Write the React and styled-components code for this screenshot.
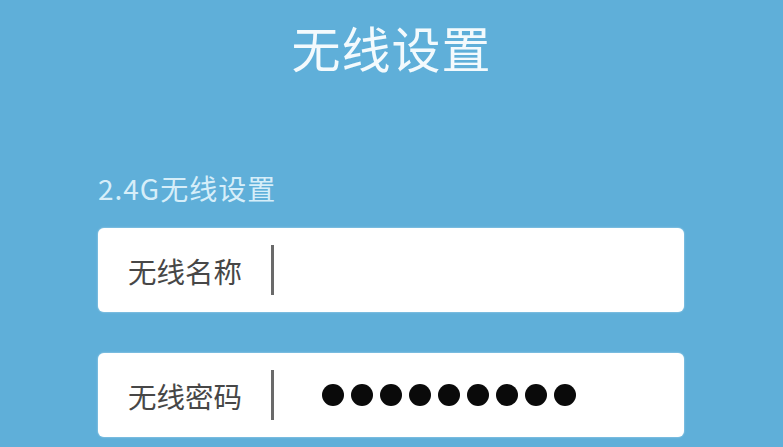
import styled, { createGlobalStyle } from "styled-components";

const GlobalStyle = createGlobalStyle`
  html, body {
    margin: 0;
    padding: 0;
    background: #5fafd9;
  }
  body {
    font-family: "Noto Sans CJK SC", "Noto Sans", sans-serif;
  }
`;

const Page = styled.div`
  width: 783px;
  height: 447px;
  overflow: hidden;
  background: #5fafd9;
  display: flex;
  flex-direction: column;
`;

const Title = styled.h1`
  margin: 0;
  padding-top: 21px;
  height: 52px;
  line-height: 52px;
  text-align: center;
  font-size: 49px;
  font-weight: 400;
  color: #f3fafd;
  letter-spacing: 1px;
`;

const Content = styled.div`
  display: flex;
  flex-direction: column;
  padding: 97px 99px 0 98px;
`;

const SectionLabel = styled.div`
  height: 36px;
  line-height: 36px;
  font-size: 28px;
  letter-spacing: 1px;
  color: #d6eef9;
  margin-bottom: 22px;
`;

const Fields = styled.div`
  display: flex;
  flex-direction: column;
  gap: 41px;
`;

const Field = styled.div`
  height: 84px;
  background: #ffffff;
  border-radius: 6px;
  display: flex;
  align-items: center;
  padding-left: 30px;
  box-shadow: 0 0 2px rgba(255, 255, 255, 0.6);
`;

const Label = styled.span`
  font-size: 28.5px;
  color: #474747;
  width: 115px;
  white-space: nowrap;
`;

const Divider = styled.span`
  width: 3px;
  height: 50px;
  background: #6a6a6a;
  margin-left: 28px;
`;

const Dots = styled.div`
  display: flex;
  gap: 7px;
  margin-left: 48px;
`;

const Dot = styled.span`
  width: 22px;
  height: 22px;
  border-radius: 50%;
  background: #0a0a0a;
`;

export default function App() {
  return (
    <Page>
      <GlobalStyle />
      <Title>无线设置</Title>
      <Content>
        <SectionLabel>2.4G无线设置</SectionLabel>
        <Fields>
          <Field>
            <Label>无线名称</Label>
            <Divider />
          </Field>
          <Field>
            <Label>无线密码</Label>
            <Divider />
            <Dots>
              {Array.from({ length: 9 }, (_, i) => (
                <Dot key={i} />
              ))}
            </Dots>
          </Field>
        </Fields>
      </Content>
    </Page>
  );
}
